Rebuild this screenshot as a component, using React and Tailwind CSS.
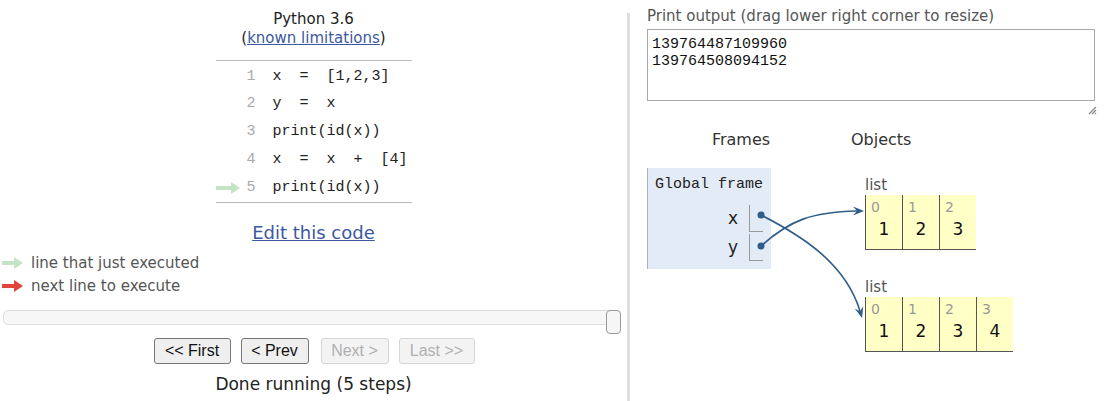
import React from "react";

const CODE = [
  "x  =  [1,2,3]",
  "y  =  x",
  "print(id(x))",
  "x  =  x  +  [4]",
  "print(id(x))",
];

const LISTS = [
  [1, 2, 3],
  [1, 2, 3, 4],
];

function Arrow({ color, w = 22 }) {
  return (
    <svg width={w} height="12" viewBox={`0 0 ${w} 12`} className="shrink-0">
      <path d={`M0 4 H${w - 9} V0 L${w} 6 L${w - 9} 12 V8 H0 Z`} fill={color} />
    </svg>
  );
}

function CodeBox() {
  return (
    <div className="mx-auto mt-[12px] w-[196px] border-y border-[#bbb] pt-[2px] text-left">
      {CODE.map((line, i) => (
        <div key={i} className="flex h-[27.75px] items-center">
          <div className="flex w-[26px] justify-start">
            {i === 4 && <Arrow color="#c5e3c5" w={24} />}
          </div>
          <div className="w-[14px] text-right font-['Liberation_Mono',monospace] text-[15px] text-[#aaa]">{i + 1}</div>
          <div className="whitespace-pre pl-[17px] font-['Liberation_Mono',monospace] text-[15px] text-[#222]">{line}</div>
        </div>
      ))}
    </div>
  );
}

function NavButton({ children, className, disabled }) {
  return (
    <button
      disabled={disabled}
      className={
        "h-[26px] rounded-[3px] border font-['Liberation_Sans',Arial,sans-serif] text-[16px] leading-none " +
        (disabled ? "border-[#d6d6d6] bg-[#f3f3f3] text-[#b0b0b0] " : "border-[#767676] bg-[#efefef] text-[#111] ") +
        className
      }
    >
      {children}
    </button>
  );
}

function LeftPane() {
  return (
    <div className="w-[627px] shrink-0 pt-[10px] text-center">
      <div className="text-[15px] leading-[19px] text-[#222]">Python 3.6</div>
      <div className="text-[15px] leading-[19px] text-[#222]">
        (<span className="text-[#3d58a2] underline">known limitations</span>)
      </div>
      <CodeBox />
      <div className="mt-[18px] text-[18px] leading-[24px] text-[#3d58a2] underline">Edit this code</div>
      <div className="mt-[7px] pl-[2px] text-left text-[15px] leading-[23px] text-[#555]">
        <div className="flex items-center gap-[8px]">
          <Arrow color="#c5e3c5" w={21} />
          <span>line that just executed</span>
        </div>
        <div className="flex items-center gap-[8px]">
          <Arrow color="#e0443a" w={21} />
          <span>next line to execute</span>
        </div>
      </div>
      <div className="relative ml-[3px] mr-[6px] mt-[12px] h-[24px]">
        <div className="mt-[3px] h-[15px] rounded-[5px] border border-[#ddd] bg-[#f7f7f7]" />
        <div className="absolute right-0 top-0 h-[24px] w-[15px] rounded-[4px] border border-[#999] bg-[#f6f6f6]" />
      </div>
      <div className="mt-[4px] flex justify-center pl-[1px]">
        <NavButton className="w-[77px]">&lt;&lt; First</NavButton>
        <NavButton className="ml-[10px] w-[68px]">&lt; Prev</NavButton>
        <NavButton className="ml-[12px] w-[68px]" disabled>Next &gt;</NavButton>
        <NavButton className="ml-[10px] w-[76px]" disabled>Last &gt;&gt;</NavButton>
      </div>
      <div className="mt-[9px] text-[17px] leading-[22px] text-[#222]">Done running (5 steps)</div>
    </div>
  );
}

function Frame() {
  return (
    <div className="mt-[18px] h-[101px] w-[124px] border-l border-[#a6b3b6] bg-[#e2ebf6] pl-[7px] pt-[8px]">
      <div className="font-['Liberation_Mono',monospace] text-[15px] leading-[17px] text-[#222]">Global frame</div>
      <div className="mt-[12px] flex flex-col gap-[2px] pr-[8px]">
        {["x", "y"].map((v) => (
          <div key={v} className="flex h-[27px] items-center justify-end">
            <span className="mr-[11px] text-[17px] text-[#222]">{v}</span>
            <div className="h-[27px] w-[14px] border-b border-l border-[#999]" />
          </div>
        ))}
      </div>
    </div>
  );
}

function ListObj({ items, className }) {
  return (
    <div className={className}>
      <div className="text-[15px] leading-[20px] text-[#555]">list</div>
      <div className="flex">
        {items.map((n, i) => (
          <div key={i} className="h-[55px] w-[37px] border-b border-l border-[#555] bg-[#ffffc6] pl-[5px]">
            <div className="pt-[3px] text-[14px] leading-[18px] text-[#999]">{i}</div>
            <div className="mt-[2px] pr-[5px] text-center text-[17px] leading-[22px] text-[#111]">{n}</div>
          </div>
        ))}
      </div>
    </div>
  );
}

function RightPane() {
  return (
    <div className="pl-[17px] pt-[7px]">
      <div className="text-[15px] leading-[19px] text-[#555]">Print output (drag lower right corner to resize)</div>
      <div className="mt-[3px] h-[72px] w-[448px] border border-[#a9a9a9] pl-[4px] pt-[6px] font-['Liberation_Mono',monospace] text-[15px] leading-[17px] text-[#111]">
        <div>139764487109960</div>
        <div>139764508094152</div>
      </div>
      <div className="flex h-[16px] w-[450px] justify-end pt-[5px]">
        <svg width="9" height="9" viewBox="0 0 9 9">
          <path d="M8 1 L1 8 M8 4 L4 8 M8 7 L7 8" stroke="#888" strokeWidth="1.2" />
        </svg>
      </div>
      <div className="mt-[13px] flex">
        <div className="w-[188px]">
          <div className="text-center text-[16px] leading-[20px] text-[#333]">Frames</div>
          <Frame />
        </div>
        <div className="pl-[16px]">
          <div className="text-[16px] leading-[20px] text-[#333]">Objects</div>
          <div className="pl-[14px]">
            <ListObj items={LISTS[0]} className="mt-[25px]" />
            <ListObj items={LISTS[1]} className="mt-[27px]" />
          </div>
        </div>
      </div>
    </div>
  );
}

function Pointers() {
  const c = "#2f5d8a";
  return (
    <svg className="pointer-events-none absolute inset-0" width="1111" height="401">
      <circle cx="761" cy="215" r="3.5" fill={c} />
      <circle cx="761" cy="246" r="3.5" fill={c} />
      <path d="M761 215 C800 235 845 262 860 311" stroke={c} strokeWidth="1.6" fill="none" />
      <polygon points="862,318 854.7,308.6 860.1,311.3 863.3,306.2" fill={c} />
      <path d="M761 246 C790 220 812 212 857 211" stroke={c} strokeWidth="1.6" fill="none" />
      <polygon points="864,211 853,206.5 857,211 853,215.5" fill={c} />
    </svg>
  );
}

export default function App() {
  return (
    <div className="relative flex h-[401px] w-[1111px] overflow-hidden bg-white font-['DejaVu_Sans',Verdana,sans-serif]">
      <LeftPane />
      <div className="mt-[13px] w-[3px] shrink-0 bg-[#ddd]" />
      <RightPane />
      <Pointers />
    </div>
  );
}
